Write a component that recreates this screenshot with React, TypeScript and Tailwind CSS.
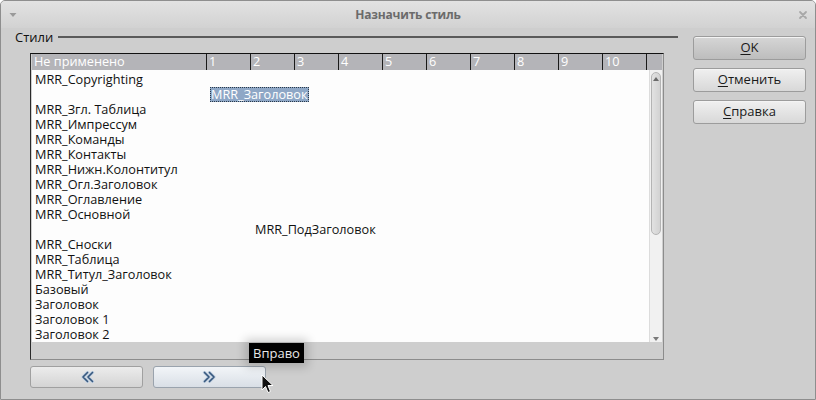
import React from 'react';

const rows: { text: string; col: number; selected?: boolean }[] = [
  { text: 'MRR_Copyrighting', col: 0 },
  { text: 'MRR_Заголовок', col: 1, selected: true },
  { text: 'MRR_Згл. Таблица', col: 0 },
  { text: 'MRR_Импрессум', col: 0 },
  { text: 'MRR_Команды', col: 0 },
  { text: 'MRR_Контакты', col: 0 },
  { text: 'MRR_Нижн.Колонтитул', col: 0 },
  { text: 'MRR_Огл.Заголовок', col: 0 },
  { text: 'MRR_Оглавление', col: 0 },
  { text: 'MRR_Основной', col: 0 },
  { text: 'MRR_ПодЗаголовок', col: 2 },
  { text: 'MRR_Сноски', col: 0 },
  { text: 'MRR_Таблица', col: 0 },
  { text: 'MRR_Титул_Заголовок', col: 0 },
  { text: 'Базовый', col: 0 },
  { text: 'Заголовок', col: 0 },
  { text: 'Заголовок 1', col: 0 },
  { text: 'Заголовок 2', col: 0 },
];

const levels = ['1', '2', '3', '4', '5', '6', '7', '8', '9', '10'];

const DoubleChevron = ({ dir }: { dir: 'left' | 'right' }) => (
  <svg width="16" height="12" viewBox="0 0 16 12" className={dir === 'left' ? '-scale-x-100' : ''}>
    <g fill="none" strokeLinecap="round" strokeLinejoin="round">
      <path d="M2.5 1.5 L7 6 L2.5 10.5 M7.5 1.5 L12 6 L7.5 10.5" stroke="#c7d4e2" strokeWidth="3.4" />
      <path d="M2.5 1.5 L7 6 L2.5 10.5 M7.5 1.5 L12 6 L7.5 10.5" stroke="#36587f" strokeWidth="1.7" />
    </g>
  </svg>
);

const SideButton = ({ label, rest, primary }: { label: string; rest: string; primary?: boolean }) => (
  <button
    className={
      'h-[24px] w-[113px] rounded-[3px] border border-[#9c9c9c] text-[13px] text-[#1a1a1a] shadow-[inset_0_1px_0_#f4f4f4] ' +
      (primary ? 'bg-gradient-to-b from-[#d6d6d6] to-[#bdbdbd]' : 'bg-gradient-to-b from-[#f0f0f0] to-[#d8d8d8]')
    }
  >
    <span className="underline underline-offset-2">{label}</span>
    {rest}
  </button>
);

export default function App() {
  return (
    <div className="w-[816px] h-[400px] overflow-hidden bg-[#cecece] border border-[#8e8e8e] rounded-t-[5px] font-['Open_Sans',sans-serif] relative select-none">
      {/* Title bar */}
      <div className="h-[27px] flex items-center justify-between px-[7px] bg-gradient-to-b from-[#e2e2e2] to-[#d2d2d2]">
        <svg width="10" height="8" viewBox="0 0 10 8">
          <path d="M1.5 2 L8.5 2 L5 6 Z" fill="#9a9a9a" />
        </svg>
        <span className="text-[12px] font-bold text-[#6b6b6b] tracking-[-0.2px]">Назначить стиль</span>
        <svg width="10" height="10" viewBox="0 0 10 10">
          <path d="M2 2 L8 8 M8 2 L2 8" stroke="#a8a8a8" strokeWidth="1.8" strokeLinecap="round" />
        </svg>
      </div>

      <div className="flex">
        {/* Left part */}
        <div className="w-[677px] pl-[14px] flex flex-col">
          <div className="h-[18px] flex items-center">
            <span className="text-[13px] text-[#111] leading-none">Стили</span>
            <div className="flex-1 ml-[5px] h-[2px] bg-[#5a5a5a]" />
          </div>

          {/* Frame */}
          <div className="ml-[15px] mt-[7px] w-[634px] h-[307px] border border-[#8c8c8c] border-l-[#2a2a2a] border-t-[#111] flex flex-col">
            <div className="ml-[1px] w-[630px] flex flex-col">
              {/* Header */}
              <div className="h-[16px] flex bg-[#b4b4b8] text-[12.7px] text-white leading-[15px]">
                <div className="w-[174px] pl-[2px]">Не применено</div>
                {levels.map((l) => (
                  <div key={l} className="w-[44px] pl-[2px] border-l border-[#1a1a1a]">
                    {l}
                  </div>
                ))}
                <div className="flex-1 border-l border-[#1a1a1a]" />
              </div>
              <div className="flex h-[272px]">
                {/* Body */}
                <div className="w-[617px] bg-[#fdfdfd] pt-[2px] overflow-hidden">
                  {rows.map((r, i) => (
                    <div key={i} className="h-[15px] flex text-[12.7px] leading-[15px] text-[#111] whitespace-nowrap">
                      {r.col === 0 && <span className="pl-[3px]">{r.text}</span>}
                      {r.col === 1 && (
                        <span className="ml-[178px] px-[1px] bg-[#8ea7c6] text-white outline outline-1 outline-dotted outline-[#2a3a4a] -outline-offset-1">
                          {r.text}
                        </span>
                      )}
                      {r.col === 2 && <span className="ml-[223px]">{r.text}</span>}
                    </div>
                  ))}
                </div>
                {/* Scrollbar */}
                <div className="w-[13px] bg-[#f1f1f1] border-l border-[#dcdcdc] flex flex-col items-center pt-[2px] pb-[1px]">
                  <div className="w-[10px] h-[163px] rounded-[5px] border border-[#b4b4b4] bg-gradient-to-r from-[#e2e2e2] to-[#d2d2d2] flex justify-center pt-[4px]">
                    <svg width="6" height="4" viewBox="0 0 6 4">
                      <path d="M0 4 L3 0 L6 4 Z" fill="#6a6a6a" />
                    </svg>
                  </div>
                  <div className="flex-1" />
                  <svg width="6" height="4" viewBox="0 0 6 4">
                    <path d="M0 0 L3 4 L6 0 Z" fill="#7a7a7a" />
                  </svg>
                </div>
              </div>
            </div>
          </div>

          {/* Bottom buttons */}
          <div className="ml-[15px] mt-[6px] flex gap-[10px]">
            <button className="w-[113px] h-[22px] rounded-[3px] border border-[#a0a0a0] bg-gradient-to-b from-[#ececec] to-[#d4d4d4] flex items-center justify-center">
              <DoubleChevron dir="left" />
            </button>
            <button className="w-[113px] h-[22px] rounded-[3px] border border-[#9aa3ad] bg-gradient-to-b from-[#f2f5f8] to-[#d9dfe6] flex items-center justify-center">
              <DoubleChevron dir="right" />
            </button>
          </div>
        </div>

        {/* Right buttons */}
        <div className="ml-[15px] mt-[8px] flex flex-col gap-[8px]">
          <SideButton label="O" rest="K" primary />
          <SideButton label="О" rest="тменить" />
          <SideButton label="С" rest="правка" />
        </div>
      </div>

      {/* Tooltip */}
      <div className="absolute left-[248px] top-[342px] h-[20px] px-[4px] bg-black text-[#e8e8e8] text-[13px] leading-[20px] shadow-[0_0_10px_4px_rgba(0,0,0,0.18)]">
        Вправо
      </div>

      {/* Cursor */}
      <svg className="absolute left-[260px] top-[373px]" width="14" height="20" viewBox="0 0 14 20">
        <path d="M1 1 L1 16 L4.5 12.5 L7 18.5 L9.5 17.5 L7 11.5 L12 11.5 Z" fill="#111" stroke="#fff" strokeWidth="1" strokeLinejoin="round" />
      </svg>
    </div>
  );
}
